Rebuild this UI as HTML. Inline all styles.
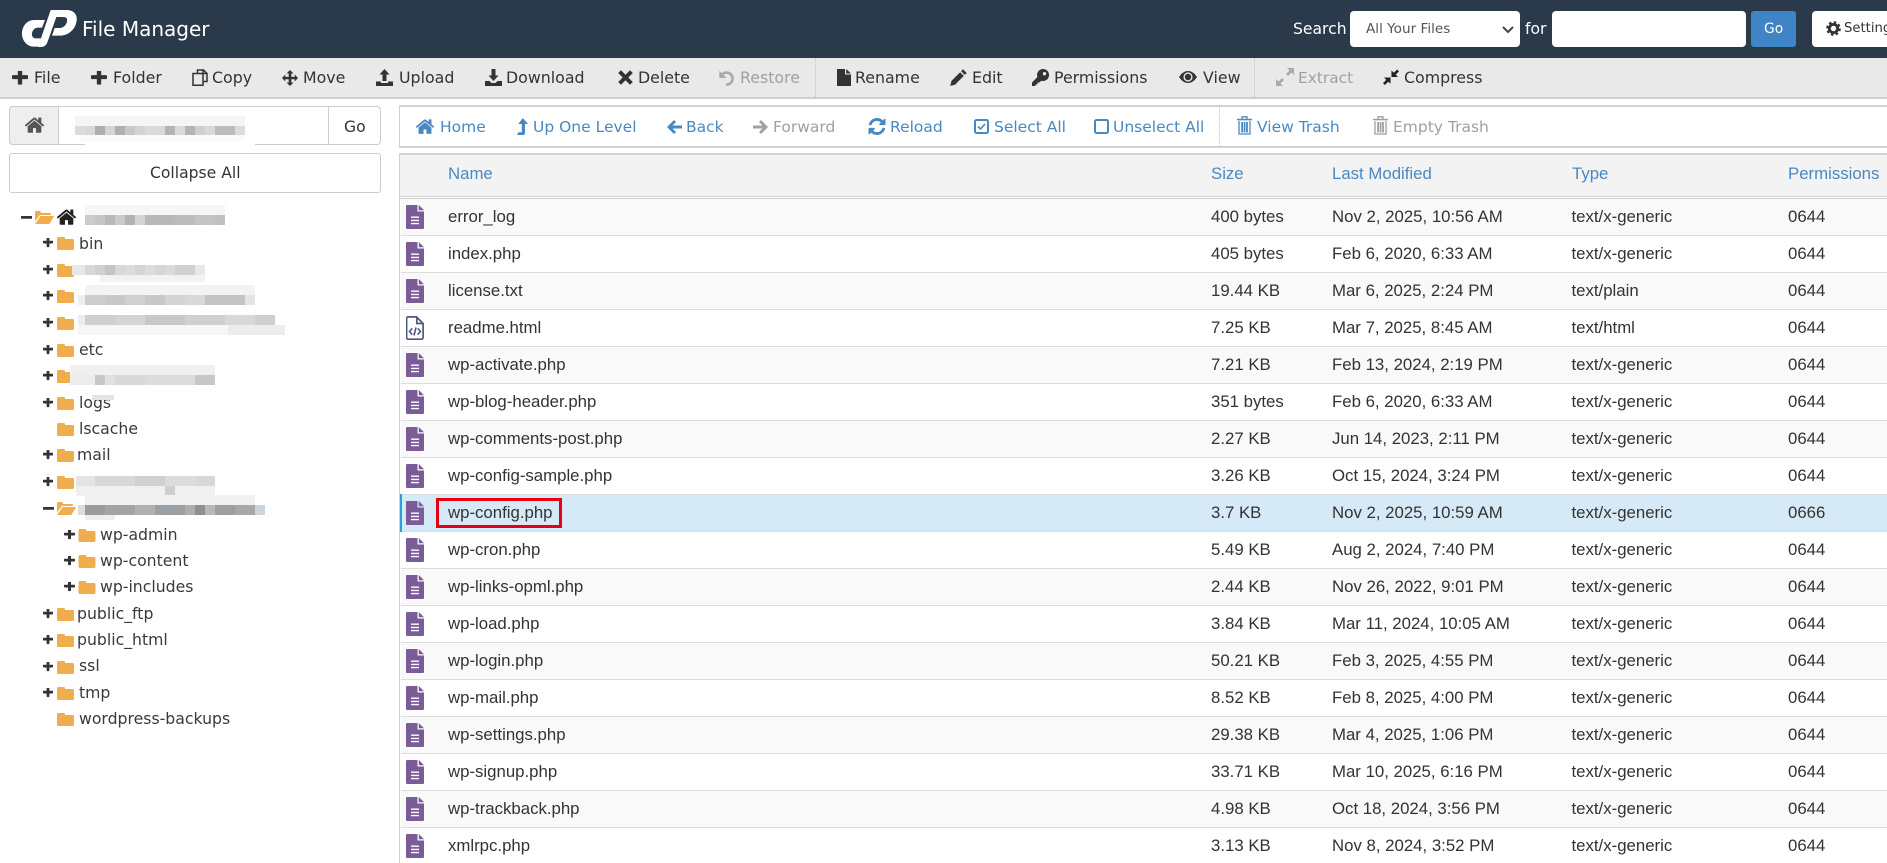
<!DOCTYPE html>
<html><head><meta charset="utf-8"><title>File Manager</title>
<style>
html,body{margin:0;padding:0;width:1887px;height:863px;overflow:hidden;background:#fff}
body{position:relative;font-family:"DejaVu Sans","Liberation Sans",sans-serif;color:#333}
div,span,svg{position:absolute;box-sizing:border-box}
.t{white-space:nowrap;line-height:20px;font-size:15.8px}
.n{font-size:15.5px}
.k{color:#333}.g{color:#a0a0a0}.l{color:#4a88c2}.w{color:#fff}
.tr{white-space:nowrap;line-height:20px;font-size:15.7px;color:#3a3a3a}
.r{left:401px;width:1486px;height:37px;border-bottom:1px solid #ddd;font-family:"Liberation Sans",sans-serif;font-size:16.8px;color:#333;line-height:20px}
.r span{top:8px;white-space:nowrap}
.r svg{left:5px;top:6px;width:18px;height:24px}
.o{background:#f9f9f9}
.a{left:47px}.b{left:810px}.c{left:931px}.d{left:1170.5px}.e{left:1387px}
.h{font-family:"Liberation Sans",sans-serif;font-size:16.8px;color:#4a88c2;line-height:20px;white-space:nowrap;top:164px}
.bl{height:10px}
</style></head><body>
<svg width="0" height="0" style="left:0;top:0">
<defs>
<symbol id="plus" viewBox="192 256 1408 1408" preserveAspectRatio="none"><path fill="currentColor" d="M1600 736v192q0 40-28 68t-68 28h-416v416q0 40-28 68t-68 28h-192q-40 0-68-28t-28-68v-416h-416q-40 0-68-28t-28-68v-192q0-40 28-68t68-28h416v-416q0-40 28-68t68-28h192q40 0 68 28t28 68v416h416q40 0 68 28t28 68z" transform="translate(0 0)"/></symbol>
<symbol id="minus" viewBox="0 0 11 11"><rect y="4" width="11" height="2.800" rx=".6" fill="currentColor"/></symbol>
<symbol id="home" viewBox="96 220 1600 1330"><path fill="currentColor" d="M1472 992v480q0 26-19 45t-45 19h-384v-384h-256v384h-384q-26 0-45-19t-19-45v-480q0-1 .5-3t.5-3l575-474 575 474q1 2 1 6zm223-69l-62 74q-8 9-21 11h-3q-13 0-21-7l-692-577-692 577q-12 8-24 7-13-2-21-11l-62-74q-8-10-7-23.500t11-21.500l719-599q32-26 76-26t76 26l244 204v-195q0-14 9-23t23-9h192q14 0 23 9t9 23v408l219 182q10 8 11 21.500t-7 23.500z"/></symbol>
<symbol id="fold" viewBox="0 0 17 13"><path fill="#f0ad4e" d="M1.500 0h5A1.500 1.500 0 0 1 8 1.500V2h7.500A1.500 1.500 0 0 1 17 3.500v8a1.500 1.500 0 0 1-1.500 1.500h-14A1.500 1.500 0 0 1 0 11.500v-10A1.500 1.500 0 0 1 1.500 0z"/></symbol>
<symbol id="open" viewBox="0 0 19 13"><path fill="#f0ad4e" d="M1 0h4l1.500 2H15a1 1 0 0 1 1 1v1H5L0 10.500V1a1 1 0 0 1 1-1zM5.500 5H18.400q.8 0 .4.7L15 12a2 2 0 0 1-1.500 1H1q-.8 0-.4-.7z"/></symbol>
<symbol id="doc" viewBox="0 0 18 24"><path fill="#7a5c99" d="M1 0h10.500v6.500H18V23a1 1 0 0 1-1 1H1a1 1 0 0 1-1-1V1a1 1 0 0 1 1-1zM12.800 0L18 5.200h-5.200z"/><path fill="#fff" d="M5 11.500h8v1.400H5zM5 14.700h8v1.400H5zM5 17.900h8v1.400H5z"/></symbol>
<symbol id="htm" viewBox="0 0 18 24"><path fill="none" stroke="#4b5a7d" stroke-width="1.700" d="M2.500.9h8l6.600 6.600v14a1.700 1.700 0 0 1-1.700 1.700h-13.100a1.700 1.700 0 0 1-1.700-1.700V2.600A1.700 1.700 0 0 1 2.500.9zM10.800.9v6.600h6.300"/><path fill="none" stroke="#4b5a7d" stroke-width="1.600" d="M6.300 12.400L3.500 15.500l2.800 3.100M11.700 12.400l2.800 3.100-2.800 3.100M10 11.500l-2 8"/></symbol>
<symbol id="copy" viewBox="0 0 16 17"><path fill="none" stroke="currentColor" stroke-width="1.500" d="M5.500 4.500V1h6l3.500 3.500v8H11M1 4.500h10v11.700H1zM11 1v3.500h4"/></symbol>
<symbol id="move" viewBox="0 0 16 16"><path fill="currentColor" d="M8 0l3.500 3.500H9.300v3.400h3.400V4.500L16 8l-3.300 3.500V9.200H9.300v3.300h2.200L8 16l-3.500-3.500h2.200V9.200H3.300v2.300L0 8l3.300-3.500v2.400h3.400V3.500H4.500z"/></symbol>
<symbol id="up" viewBox="0 0 17 17"><path fill="currentColor" d="M8.500 0l5 5.500h-3V12h-4V5.500h-3zM0 12.500h5V14h7v-1.500h5V17H0z"/></symbol>
<symbol id="down" viewBox="0 0 17 17"><path fill="currentColor" d="M6.500 0h4v6.500h3l-5 5.500-5-5.500h3zM0 12h4.500l2 2h4l2-2H17v5H0z"/></symbol>
<symbol id="x" viewBox="0 0 15 15"><path fill="currentColor" d="M3 .3l4.500 4.400L12 .3 14.800 3l-4.500 4.500L14.800 12 12 14.800 7.500 10.300 3 14.800.2 12l4.500-4.500L.2 3z"/></symbol>
<symbol id="undo" viewBox="0 0 16 16"><path fill="none" stroke="currentColor" stroke-width="2.600" d="M3.500 4.200A6 6 0 1 1 7 14.600"/><path fill="currentColor" d="M.3 .8L7.500 8H.3z"/></symbol>
<symbol id="ren" viewBox="0 0 14 17"><path fill="currentColor" d="M0 0h8v5.500h6V17H0zM9.200 0L14 4.500H9.200z"/></symbol>
<symbol id="pen" viewBox="0 0 17 17"><path fill="currentColor" d="M13 .3l3.700 3.700-1.900 1.900L11.100 2.200zM10.100 3.200l3.700 3.700L5 15.700l-4.700 1.200L1.400 12z"/></symbol>
<symbol id="key" viewBox="0 0 17 17"><path fill="currentColor" fill-rule="evenodd" d="M11 0a6 6 0 1 1-1.800 11.700L7.500 13.500h-2v2h-2V17H0v-3.500L5.400 8A6 6 0 0 1 11 0zm1.500 3a1.700 1.700 0 1 0 0 3.400 1.700 1.700 0 0 0 0-3.400z"/></symbol>
<symbol id="eye" viewBox="0 0 18 12"><path fill="currentColor" d="M0 6C3 1.500 6 0 9 0s6 1.500 9 6c-3 4.500-6 6-9 6S3 10.500 0 6z"/><circle cx="9" cy="6" r="4.600" fill="#e9e9e9"/><circle cx="9" cy="6" r="3.200" fill="currentColor"/></symbol>
<symbol id="exp" viewBox="0 0 18 18"><path fill="currentColor" d="M11 0h7v7l-2.500-2.500-3.500 3.500-2-2 3.500-3.500zM0 18v-7l2.500 2.500 3.500-3.500 2 2-3.500 3.500 2.500 2.500z"/></symbol>
<symbol id="cmp" viewBox="0 0 17 17"><path fill="currentColor" d="M9 1.500V8.500h7l-2.500-2.500L17 2.500 15 .5 11.500 4zM8 15.500V9H1l2.500 2.500L0 15l2 2 3.500-3.500z"/></symbol>
<symbol id="lvl" viewBox="0 0 11 17"><path fill="currentColor" d="M5.800 0L11 6H8V15a2 2 0 0 1-2 2H0l1.500-2.800H4.800V6H1.300z"/></symbol>
<symbol id="lft" viewBox="0 0 15 14"><path fill="currentColor" d="M7 0l2 2-3.500 3.500H15v3H5.500L9 12l-2 2-7-7z"/></symbol>
<symbol id="rgt" viewBox="0 0 15 14"><path fill="currentColor" d="M8 0L6 2l3.500 3.500H0v3h9.500L6 12l2 2 7-7z"/></symbol>
<symbol id="rel" viewBox="128 128 1536 1536"><path fill="currentColor" d="M1639 1056q0 5-1 7-64 268-268 434.500t-478 166.500q-146 0-282.500-55t-243.500-157l-129 129q-19 19-45 19t-45-19-19-45v-448q0-26 19-45t45-19h448q26 0 45 19t19 45-19 45l-137 137q71 66 161 102t187 36q134 0 250-65t186-179q11-17 53-117 8-23 30-23h192q13 0 22.500 9.500t9.500 22.500zm25-800v448q0 26-19 45t-45 19h-448q-26 0-45-19t-19-45 19-45l138-138q-148-137-349-137-134 0-250 65t-186 179q-11 17-53 117-8 23-30 23h-199q-13 0-22.500-9.500t-9.500-22.500v-7q65-268 270-434.500t480-166.500q146 0 284 55.500t245 156.500l130-129q19-19 45-19t45 19 19 45z"/></symbol>
<symbol id="chk" viewBox="0 0 15 15"><rect x="1" y="1" width="13" height="13" rx="1.500" fill="none" stroke="currentColor" stroke-width="2"/><path fill="none" stroke="currentColor" stroke-width="1.600" d="M4 7.500l2.500 2.500L11 5"/></symbol>
<symbol id="box" viewBox="0 0 15 15"><rect x="1" y="1" width="13" height="13" rx="1.500" fill="none" stroke="currentColor" stroke-width="2"/></symbol>
<symbol id="tra" viewBox="0 0 15 19"><path fill="none" stroke="currentColor" stroke-width="1.300" d="M5 3V.8h5V3"/><rect y="2.800" width="15" height="1.500" fill="currentColor"/><path fill="none" stroke="currentColor" stroke-width="1.300" d="M2 5v13h11V5"/><path fill="currentColor" d="M4.200 6h1.800v10.500H4.200zM6.700 6h1.700v10.500H6.700zM9.100 6h1.800v10.500H9.100z"/></symbol>
<symbol id="gear" viewBox="0 0 17 17"><circle cx="8.500" cy="8.500" r="4.700" fill="none" stroke="currentColor" stroke-width="3.200"/><circle cx="8.500" cy="8.500" r="7" fill="none" stroke="currentColor" stroke-width="2.600" stroke-dasharray="2.900 2.600"/></symbol>
</defs></svg>

<!-- header -->
<div style="left:0;top:0;width:1887px;height:58px;background:#2a3a4b"></div>
<svg style="left:10px;top:5px;width:80px;height:50px" viewBox="0 0 240 150"><path fill="#fff" d="M105 45H72C52 45 38 62 36 82c-2 22 14 43 36 43h18l10-25H77c-8 0-13-7-11-16 2-9 9-16 18-16h12z"/><path fill="#fff" d="M122 15h48c24 0 36 18 28 41-7 22-26 36-48 36h-24l8-23h15c11 0 20-9 22-20 2-9-3-13-11-13h-21l-27 76c-3 9-10 14-20 14h-8z"/></svg>
<span class="t w" style="left:82px;top:19px;font-size:20px">File Manager</span>
<span class="t w" style="left:1293px;top:19px;font-size:15.6px">Search</span>
<div style="left:1350px;top:11px;width:170px;height:36px;background:#fff;border-radius:4px"></div>
<span class="t" style="left:1366px;top:19px;font-size:13.6px;color:#555">All Your Files</span>
<svg style="left:1502px;top:26px;width:12px;height:8px" viewBox="0 0 12 8"><path d="M1 1l5 5 5-5" fill="none" stroke="#444" stroke-width="2"/></svg>
<span class="t w" style="left:1525px;top:19px;font-size:15.6px">for</span>
<div style="left:1552px;top:11px;width:194px;height:36px;background:#fff;border-radius:4px"></div>
<div style="left:1751px;top:11px;width:45px;height:36px;background:#3f84c5;border-radius:3px"></div>
<span class="t w" style="left:1764px;top:19px;font-size:13.8px">Go</span>
<div style="left:1812px;top:11px;width:90px;height:36px;background:#fff;border-radius:4px"></div>
<svg style="left:1826px;top:21px;width:15px;height:15px;color:#333"><use href="#gear"/></svg>
<span class="t k" style="left:1844px;top:19px;font-size:13.2px">Settings</span>

<!-- toolbar -->
<div style="left:0;top:58px;width:1887px;height:41px;background:#e9e9e9;border-bottom:2px solid #cfcfcf"></div>
<div style="left:815px;top:58px;width:1px;height:39px;border-left:1px dotted #c4c4c4"></div>
<div style="left:1254px;top:58px;width:1px;height:39px;border-left:1px dotted #c4c4c4"></div>
<svg style="left:12px;top:71px;width:16px;height:15px;color:#333"><use href="#plus"/></svg><span class="t k" style="left:34px;top:68px">File</span>
<svg style="left:91px;top:71px;width:16px;height:15px;color:#333"><use href="#plus"/></svg><span class="t k" style="left:113px;top:68px">Folder</span>
<svg style="left:192px;top:69px;width:16px;height:17px;color:#333"><use href="#copy"/></svg><span class="t k" style="left:212px;top:68px">Copy</span>
<svg style="left:282px;top:70px;width:16px;height:16px;color:#333"><use href="#move"/></svg><span class="t k" style="left:303px;top:68px">Move</span>
<svg style="left:376px;top:69px;width:17px;height:17px;color:#333"><use href="#up"/></svg><span class="t k" style="left:399px;top:68px">Upload</span>
<svg style="left:485px;top:69px;width:17px;height:17px;color:#333"><use href="#down"/></svg><span class="t k" style="left:506px;top:68px">Download</span>
<svg style="left:618px;top:70px;width:15px;height:15px;color:#333"><use href="#x"/></svg><span class="t k" style="left:638px;top:68px">Delete</span>
<svg style="left:719px;top:70px;width:16px;height:16px;color:#aaa"><use href="#undo"/></svg><span class="t g" style="left:740px;top:68px">Restore</span>
<svg style="left:837px;top:69px;width:14px;height:17px;color:#333"><use href="#ren"/></svg><span class="t k" style="left:855px;top:68px">Rename</span>
<svg style="left:950px;top:69px;width:17px;height:17px;color:#333"><use href="#pen"/></svg><span class="t k" style="left:972px;top:68px">Edit</span>
<svg style="left:1032px;top:69px;width:17px;height:17px;color:#333"><use href="#key"/></svg><span class="t k" style="left:1054px;top:68px">Permissions</span>
<svg style="left:1179px;top:71px;width:18px;height:12px;color:#333"><use href="#eye"/></svg><span class="t k" style="left:1203px;top:68px">View</span>
<svg style="left:1276px;top:68px;width:18px;height:18px;color:#aaa"><use href="#exp"/></svg><span class="t g" style="left:1298px;top:68px;font-size:15.4px">Extract</span>
<svg style="left:1383px;top:69px;width:16px;height:16px;color:#222"><use href="#cmp"/></svg><span class="t k" style="left:1404px;top:68px">Compress</span>

<!-- left panel -->
<div style="left:9px;top:106px;width:372px;height:39px;border:1px solid #ccc;border-radius:4px;background:#fff"></div>
<div style="left:9px;top:106px;width:50px;height:39px;border:1px solid #ccc;border-radius:4px 0 0 4px;background:#eee"></div>
<svg style="left:25px;top:117px;width:19px;height:16px;color:#555"><use href="#home"/></svg>
<div style="left:328px;top:106px;width:1px;height:39px;background:#ccc"></div>
<span class="t k" style="left:344px;top:117px;font-size:15.6px">Go</span>
<div style="left:85px;top:140px;width:170px;height:10px;background:#fff"></div>
<div style="left:75px;top:116px;width:170px;height:10px;background:#f5f5f5"></div>
<div class="bl" style="left:75px;top:126px;width:170px;height:9px;background:linear-gradient(90deg,#dcdcdc 0 10px,#d8d8d8 0 20px,#aeaeae 0 30px,#d4d4d4 0 40px,#b0b0b0 0 50px,#c8c8c8 0 60px,#d4d4d4 0 70px,#dadada 0 80px,#dadada 0 90px,#b4b4b4 0 100px,#dadada 0 110px,#b4b4b4 0 120px,#cfcfcf 0 130px,#d8d8d8 0 140px,#bcbcbc 0 160px,#dcdcdc 0 170px)"></div>
<div style="left:80px;top:135px;width:165px;height:6px;background:#fafafa"></div>
<div style="left:9px;top:153px;width:372px;height:40px;border:1px solid #ccc;border-radius:3px;background:#fff"></div>
<span class="t k" style="left:150px;top:163px;font-size:15.6px">Collapse All</span>

<!-- tree -->
<svg style="left:21px;top:212px;width:11px;height:11px;color:#333"><use href="#minus"/></svg>
<svg style="left:35px;top:211px;width:19px;height:13px"><use href="#open"/></svg>
<svg style="left:57px;top:209px;width:19px;height:16px;color:#222"><use href="#home"/></svg>
<div style="left:85px;top:205px;width:140px;height:10px;background:#f6f6f6"></div>
<div class="bl" style="left:85px;top:215px;width:140px;background:linear-gradient(90deg,#cbcbcb 0 10px,#c6c6c6 0 20px,#b8b8b8 0 30px,#cacaca 0 40px,#b2b2b2 0 50px,#d4d4d4 0 60px,#b8b8b8 0 90px,#bcbcbc 0 110px,#c4c4c4 0 130px,#c0c0c0 0 140px)"></div>

<svg style="left:43px;top:238px;width:10px;height:10px;color:#333"><use href="#plus"/></svg><svg style="left:57px;top:237px;width:17px;height:13px"><use href="#fold"/></svg><span class="tr" style="left:79px;top:234px">bin</span>

<svg style="left:43px;top:265px;width:10px;height:10px;color:#333"><use href="#plus"/></svg><svg style="left:57px;top:264px;width:17px;height:13px"><use href="#fold"/></svg>
<div class="bl" style="left:72px;top:265px;width:133px;background:linear-gradient(90deg,#e8e8e8 0 13px,#d8d8d8 0 23px,#d0d0d0 0 33px,#c4c4c4 0 43px,#d8d8d8 0 53px,#dcdcdc 0 63px,#d4d4d4 0 73px,#dcdcdc 0 83px,#d6d6d6 0 93px,#d8dce0 0 103px,#d0d0d0 0 123px,#e8e8e8 0 133px)"></div>
<div style="left:100px;top:275px;width:105px;height:7px;background:#f2f2f2"></div>

<svg style="left:43px;top:291px;width:10px;height:10px;color:#333"><use href="#plus"/></svg><svg style="left:57px;top:290px;width:17px;height:13px"><use href="#fold"/></svg>
<div style="left:85px;top:285px;width:170px;height:10px;background:#f3f3f3"></div>
<div class="bl" style="left:78px;top:295px;width:177px;background:linear-gradient(90deg,#efefef 0 7px,#cdcdcd 0 27px,#c8c8c8 0 47px,#d0d0d0 0 67px,#c8c8c8 0 87px,#d4d4d4 0 107px,#d8d8d8 0 127px,#c4c4c4 0 167px,#e4e4e4 0 177px)"></div>

<svg style="left:43px;top:318px;width:10px;height:10px;color:#333"><use href="#plus"/></svg><svg style="left:57px;top:317px;width:17px;height:13px"><use href="#fold"/></svg>
<div class="bl" style="left:78px;top:315px;width:197px;background:linear-gradient(90deg,#ececec 0 7px,#cfcfcf 0 37px,#d4d4d4 0 67px,#c8c8c8 0 107px,#d0d0d0 0 147px,#d8d8d8 0 177px,#cfcfcf 0 197px)"></div>
<div style="left:78px;top:325px;width:150px;height:10px;background:#f6f6f6"></div>
<div style="left:228px;top:325px;width:57px;height:10px;background:#ededed"></div>

<svg style="left:43px;top:345px;width:10px;height:10px;color:#333"><use href="#plus"/></svg><svg style="left:57px;top:344px;width:17px;height:13px"><use href="#fold"/></svg><span class="tr" style="left:79px;top:340px">etc</span>

<svg style="left:43px;top:371px;width:10px;height:10px;color:#333"><use href="#plus"/></svg><svg style="left:57px;top:370px;width:17px;height:13px"><use href="#fold"/></svg>
<div style="left:70px;top:365px;width:145px;height:10px;background:#f0f0f0"></div>
<div class="bl" style="left:70px;top:375px;width:145px;background:linear-gradient(90deg,#ececec 0 25px,#c8c8c8 0 35px,#e0e0e0 0 45px,#d8d8d8 0 75px,#dcdcdc 0 125px,#c8c8c8 0 145px)"></div>

<svg style="left:43px;top:398px;width:10px;height:10px;color:#333"><use href="#plus"/></svg><svg style="left:57px;top:397px;width:17px;height:13px"><use href="#fold"/></svg><span class="tr" style="left:79px;top:393px">logs</span>
<div style="left:92px;top:395px;width:22px;height:5px;background:#e4e4e4"></div>

<svg style="left:57px;top:423px;width:17px;height:13px"><use href="#fold"/></svg><span class="tr" style="left:79px;top:419px">lscache</span>

<svg style="left:43px;top:450px;width:10px;height:10px;color:#333"><use href="#plus"/></svg><svg style="left:57px;top:449px;width:17px;height:13px"><use href="#fold"/></svg><span class="tr" style="left:77px;top:445px">mail</span>

<svg style="left:43px;top:477px;width:10px;height:10px;color:#333"><use href="#plus"/></svg><svg style="left:57px;top:476px;width:17px;height:13px"><use href="#fold"/></svg>
<div class="bl" style="left:76px;top:476px;width:139px;background:linear-gradient(90deg,#e4e4e4 0 19px,#d8d8d8 0 59px,#d0d0d0 0 89px,#dcdcdc 0 119px,#d8d8d8 0 139px)"></div>
<div style="left:76px;top:486px;width:139px;height:10px;background:#f0f0f0"></div>
<div style="left:165px;top:486px;width:10px;height:16px;background:#cfcfcf"></div>

<svg style="left:43px;top:503px;width:11px;height:11px;color:#333"><use href="#minus"/></svg><svg style="left:57px;top:502px;width:19px;height:13px"><use href="#open"/></svg>
<div style="left:85px;top:495px;width:170px;height:10px;background:#f1f1f1"></div>
<div class="bl" style="left:78px;top:505px;width:187px;background:linear-gradient(90deg,#dcdcdc 0 7px,#9b9b9b 0 27px,#a4a4a4 0 57px,#b4b0ac 0 77px,#9aa0a4 0 107px,#b0aeac 0 117px,#8f8f8f 0 127px,#b8b8b8 0 137px,#9e9e9e 0 157px,#a8a8a8 0 177px,#ccd4dc 0 187px)"></div>
<div style="left:85px;top:515px;width:30px;height:5px;background:#eee"></div>

<svg style="left:64px;top:530px;width:11px;height:10px;color:#333"><use href="#plus"/></svg><svg style="left:78px;top:529px;width:18px;height:13px"><use href="#fold"/></svg><span class="tr" style="left:100px;top:525px">wp-admin</span>
<svg style="left:64px;top:556px;width:11px;height:10px;color:#333"><use href="#plus"/></svg><svg style="left:78px;top:555px;width:18px;height:13px"><use href="#fold"/></svg><span class="tr" style="left:100px;top:551px">wp-content</span>
<svg style="left:64px;top:582px;width:11px;height:10px;color:#333"><use href="#plus"/></svg><svg style="left:78px;top:581px;width:18px;height:13px"><use href="#fold"/></svg><span class="tr" style="left:100px;top:577px">wp-includes</span>
<svg style="left:43px;top:609px;width:10px;height:10px;color:#333"><use href="#plus"/></svg><svg style="left:57px;top:608px;width:17px;height:13px"><use href="#fold"/></svg><span class="tr" style="left:77px;top:604px">public_ftp</span>
<svg style="left:43px;top:635px;width:10px;height:10px;color:#333"><use href="#plus"/></svg><svg style="left:57px;top:634px;width:17px;height:13px"><use href="#fold"/></svg><span class="tr" style="left:77px;top:630px">public_html</span>
<svg style="left:43px;top:662px;width:10px;height:10px;color:#333"><use href="#plus"/></svg><svg style="left:57px;top:661px;width:17px;height:13px"><use href="#fold"/></svg><span class="tr" style="left:79px;top:656px">ssl</span>
<svg style="left:43px;top:688px;width:10px;height:10px;color:#333"><use href="#plus"/></svg><svg style="left:57px;top:687px;width:17px;height:13px"><use href="#fold"/></svg><span class="tr" style="left:79px;top:683px">tmp</span>
<svg style="left:57px;top:713px;width:17px;height:13px"><use href="#fold"/></svg><span class="tr" style="left:79px;top:709px">wordpress-backups</span>

<!-- right nav -->
<div style="left:399px;top:105px;width:1488px;height:43px;border:solid #d2d2d2;border-width:2px 0 2px 1px;background:#fff"></div>
<div style="left:1219px;top:107px;width:1px;height:39px;border-left:1px dotted #c4c4c4"></div>
<svg style="left:416px;top:119px;width:18px;height:15px;color:#4a88c2"><use href="#home"/></svg><span class="t l n" style="left:440px;top:117px">Home</span>
<svg style="left:517px;top:118px;width:11px;height:17px;color:#4a88c2"><use href="#lvl"/></svg><span class="t l n" style="left:533px;top:117px">Up One Level</span>
<svg style="left:667px;top:120px;width:15px;height:14px;color:#4a88c2"><use href="#lft"/></svg><span class="t l n" style="left:686px;top:117px">Back</span>
<svg style="left:753px;top:120px;width:15px;height:14px;color:#a0a0a0"><use href="#rgt"/></svg><span class="t g n" style="left:773px;top:117px">Forward</span>
<svg style="left:868px;top:118px;width:18px;height:17px;color:#4a88c2"><use href="#rel"/></svg><span class="t l n" style="left:890px;top:117px">Reload</span>
<svg style="left:974px;top:119px;width:15px;height:15px;color:#4a88c2"><use href="#chk"/></svg><span class="t l n" style="left:994px;top:117px">Select All</span>
<svg style="left:1094px;top:119px;width:15px;height:15px;color:#4a88c2"><use href="#box"/></svg><span class="t l n" style="left:1113px;top:117px">Unselect All</span>
<svg style="left:1237px;top:116px;width:15px;height:19px;color:#4a88c2"><use href="#tra"/></svg><span class="t l n" style="left:1257px;top:117px">View Trash</span>
<svg style="left:1373px;top:116px;width:15px;height:19px;color:#a0a0a0"><use href="#tra"/></svg><span class="t g n" style="left:1393px;top:117px">Empty Trash</span>

<!-- table -->
<div style="left:399px;top:153px;width:1488px;height:46px;border:solid #d2d2d2;border-width:2px 0 0 1px;background:#f3f3f3"></div>
<div style="left:400px;top:196px;width:1487px;height:3px;border-top:1px solid #d4d4d4;border-bottom:1px solid #d4d4d4;background:#fafafa"></div>
<div style="left:399px;top:153px;width:1px;height:710px;background:#d2d2d2"></div>
<span class="h" style="left:448px">Name</span>
<span class="h" style="left:1211px">Size</span>
<span class="h" style="left:1332px">Last Modified</span>
<span class="h" style="left:1572px">Type</span>
<span class="h" style="left:1788px">Permissions</span>

<div class="r o" style="top:199px"><svg><use href="#doc"/></svg><span class="a">error_log</span><span class="b">400 bytes</span><span class="c">Nov 2, 2025, 10:56 AM</span><span class="d">text/x-generic</span><span class="e">0644</span></div>
<div class="r" style="top:236px"><svg><use href="#doc"/></svg><span class="a">index.php</span><span class="b">405 bytes</span><span class="c">Feb 6, 2020, 6:33 AM</span><span class="d">text/x-generic</span><span class="e">0644</span></div>
<div class="r o" style="top:273px"><svg><use href="#doc"/></svg><span class="a">license.txt</span><span class="b">19.44 KB</span><span class="c">Mar 6, 2025, 2:24 PM</span><span class="d">text/plain</span><span class="e">0644</span></div>
<div class="r" style="top:310px"><svg><use href="#htm"/></svg><span class="a">readme.html</span><span class="b">7.25 KB</span><span class="c">Mar 7, 2025, 8:45 AM</span><span class="d">text/html</span><span class="e">0644</span></div>
<div class="r o" style="top:347px"><svg><use href="#doc"/></svg><span class="a">wp-activate.php</span><span class="b">7.21 KB</span><span class="c">Feb 13, 2024, 2:19 PM</span><span class="d">text/x-generic</span><span class="e">0644</span></div>
<div class="r" style="top:384px"><svg><use href="#doc"/></svg><span class="a">wp-blog-header.php</span><span class="b">351 bytes</span><span class="c">Feb 6, 2020, 6:33 AM</span><span class="d">text/x-generic</span><span class="e">0644</span></div>
<div class="r o" style="top:421px"><svg><use href="#doc"/></svg><span class="a">wp-comments-post.php</span><span class="b">2.27 KB</span><span class="c">Jun 14, 2023, 2:11 PM</span><span class="d">text/x-generic</span><span class="e">0644</span></div>
<div class="r" style="top:458px"><svg><use href="#doc"/></svg><span class="a">wp-config-sample.php</span><span class="b">3.26 KB</span><span class="c">Oct 15, 2024, 3:24 PM</span><span class="d">text/x-generic</span><span class="e">0644</span></div>
<div class="r" style="top:495px;background:#d5e9f7"><svg><use href="#doc"/></svg><span class="a">wp-config.php</span><span class="b">3.7 KB</span><span class="c">Nov 2, 2025, 10:59 AM</span><span class="d">text/x-generic</span><span class="e">0666</span></div>
<div class="r" style="top:532px"><svg><use href="#doc"/></svg><span class="a">wp-cron.php</span><span class="b">5.49 KB</span><span class="c">Aug 2, 2024, 7:40 PM</span><span class="d">text/x-generic</span><span class="e">0644</span></div>
<div class="r o" style="top:569px"><svg><use href="#doc"/></svg><span class="a">wp-links-opml.php</span><span class="b">2.44 KB</span><span class="c">Nov 26, 2022, 9:01 PM</span><span class="d">text/x-generic</span><span class="e">0644</span></div>
<div class="r" style="top:606px"><svg><use href="#doc"/></svg><span class="a">wp-load.php</span><span class="b">3.84 KB</span><span class="c">Mar 11, 2024, 10:05 AM</span><span class="d">text/x-generic</span><span class="e">0644</span></div>
<div class="r o" style="top:643px"><svg><use href="#doc"/></svg><span class="a">wp-login.php</span><span class="b">50.21 KB</span><span class="c">Feb 3, 2025, 4:55 PM</span><span class="d">text/x-generic</span><span class="e">0644</span></div>
<div class="r" style="top:680px"><svg><use href="#doc"/></svg><span class="a">wp-mail.php</span><span class="b">8.52 KB</span><span class="c">Feb 8, 2025, 4:00 PM</span><span class="d">text/x-generic</span><span class="e">0644</span></div>
<div class="r o" style="top:717px"><svg><use href="#doc"/></svg><span class="a">wp-settings.php</span><span class="b">29.38 KB</span><span class="c">Mar 4, 2025, 1:06 PM</span><span class="d">text/x-generic</span><span class="e">0644</span></div>
<div class="r" style="top:754px"><svg><use href="#doc"/></svg><span class="a">wp-signup.php</span><span class="b">33.71 KB</span><span class="c">Mar 10, 2025, 6:16 PM</span><span class="d">text/x-generic</span><span class="e">0644</span></div>
<div class="r o" style="top:791px"><svg><use href="#doc"/></svg><span class="a">wp-trackback.php</span><span class="b">4.98 KB</span><span class="c">Oct 18, 2024, 3:56 PM</span><span class="d">text/x-generic</span><span class="e">0644</span></div>
<div class="r" style="top:828px;border-bottom:0"><svg><use href="#doc"/></svg><span class="a">xmlrpc.php</span><span class="b">3.13 KB</span><span class="c">Nov 8, 2024, 3:52 PM</span><span class="d">text/x-generic</span><span class="e">0644</span></div>

<div style="left:400px;top:494px;width:2px;height:38px;background:#2a9fd6"></div>
<div style="left:436px;top:498px;width:126px;height:30px;border:3px solid #e60012"></div>
</body></html>
